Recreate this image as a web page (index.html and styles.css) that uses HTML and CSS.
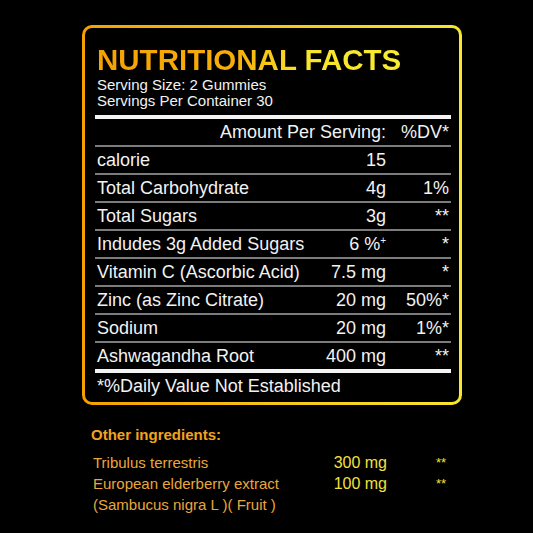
FILE: index.html
```html
<!DOCTYPE html>
<html lang="en">
<head>
    <meta charset="UTF-8">
    <meta name="viewport" content="width=device-width, initial-scale=1.0">
    <title>Nutritional Facts</title>
    <link rel="stylesheet" href="styles.css">
</head>
<body>
    <div class="label-frame">
        <div class="label">
            <h1 class="title">NUTRITIONAL FACTS</h1>
            <div class="serving">
                <div>Serving Size: 2 Gummies</div>
                <div>Servings Per Container 30</div>
            </div>

            <div class="facts">
                <div class="row head">
                    <span class="name"></span>
                    <span class="amount">Amount Per Serving:</span>
                    <span class="dv">%DV*</span>
                </div>
                <div class="row">
                    <span class="name">calorie</span>
                    <span class="amount">15</span>
                    <span class="dv"></span>
                </div>
                <div class="row">
                    <span class="name">Total Carbohydrate</span>
                    <span class="amount">4g</span>
                    <span class="dv">1%</span>
                </div>
                <div class="row">
                    <span class="name">Total Sugars</span>
                    <span class="amount">3g</span>
                    <span class="dv star">**</span>
                </div>
                <div class="row">
                    <span class="name">Indudes 3g Added Sugars</span>
                    <span class="amount">6 %<sup>+</sup></span>
                    <span class="dv star">*</span>
                </div>
                <div class="row">
                    <span class="name">Vitamin C (Ascorbic Acid)</span>
                    <span class="amount">7.5 mg</span>
                    <span class="dv star">*</span>
                </div>
                <div class="row">
                    <span class="name">Zinc (as Zinc Citrate)</span>
                    <span class="amount">20 mg</span>
                    <span class="dv">50%*</span>
                </div>
                <div class="row">
                    <span class="name">Sodium</span>
                    <span class="amount">20 mg</span>
                    <span class="dv">1%*</span>
                </div>
                <div class="row last">
                    <span class="name">Ashwagandha Root</span>
                    <span class="amount">400 mg</span>
                    <span class="dv star">**</span>
                </div>
            </div>

            <div class="footnote">*%Daily Value Not Established</div>
        </div>
    </div>

    <div class="other">
        <h2>Other ingredients:</h2>
        <div class="ingredients">
            <span class="ing-name">Tribulus terrestris</span>
            <span class="ing-amount">300 mg</span>
            <span class="ing-star">**</span>

            <span class="ing-name">European elderberry extract<br>(Sambucus nigra L )( Fruit )</span>
            <span class="ing-amount">100 mg</span>
            <span class="ing-star">**</span>
        </div>
    </div>
</body>
</html>
```

FILE: styles.css
```css
body {
    margin: 0;
    background-color: #000;
    font-family: "Liberation Sans", Arial, sans-serif;
    color: #f2f2f2;
}

/* gradient border: outer box carries the gradient, inner box is black */
.label-frame {
    width: 380px;
    height: 380px;
    box-sizing: border-box;
    margin: 25px 0 0 82px;
    padding: 3px;
    border-radius: 10px;
    background: linear-gradient(90deg, #f5a000 0%, #f7c81a 55%, #f6e82e 100%);
}

.label {
    height: 100%;
    box-sizing: border-box;
    background-color: #000;
    border-radius: 7px;
    padding: 17px 8px 0 10px;
}

.title {
    margin: 0;
    padding-left: 2px;
    font-size: 29.5px;
    line-height: 30px;
    font-weight: bold;
    background: linear-gradient(90deg, #f6a200 0%, #f7ad08 45%, #f8e42a 68%, #f8ec2e 100%);
    -webkit-background-clip: text;
    background-clip: text;
    color: transparent;
    width: max-content;
}

.serving {
    margin-top: 2px;
    padding-left: 2px;
    font-size: 15px;
    line-height: 16px;
    border-bottom: 4px solid #f4f4f4;
    padding-bottom: 6px;
}

.facts {
    font-size: 18px;
    line-height: 22px;
}

.row {
    display: flex;
    padding: 2px 2px 2px 2px;
    border-bottom: 2px solid #7c7c7c;
}

.row.last {
    border-bottom: 4px solid #f4f4f4;
}

.row .name {
    flex: 1;
}

.row .amount {
    text-align: right;
    white-space: nowrap;
}

.row .dv {
    width: 63px;
    text-align: right;
}

.row sup {
    font-size: 10px;
    line-height: 0;
    vertical-align: 6px;
}

.footnote {
    margin-top: 2px;
    padding-left: 2px;
    font-size: 18px;
    line-height: 22px;
}

.other {
    margin: 21px 0 0 91px;
    width: 356px;
}

.other h2 {
    margin: 0;
    font-size: 15px;
    line-height: 18px;
    font-weight: bold;
    color: #f2a31e;
}

.ingredients {
    display: grid;
    grid-template-columns: 1fr 80px 60px;
    margin-top: 8px;
    line-height: 21px;
    align-items: start;
}

.ing-name {
    padding-left: 2px;
    font-size: 15px;
    color: #eaa73c;
}

.ing-amount {
    font-size: 16px;
    text-align: right;
    color: #f2e03c;
}

.ing-star {
    font-size: 13px;
    text-align: right;
    padding-right: 1px;
    color: #f2e03c;
}
```
